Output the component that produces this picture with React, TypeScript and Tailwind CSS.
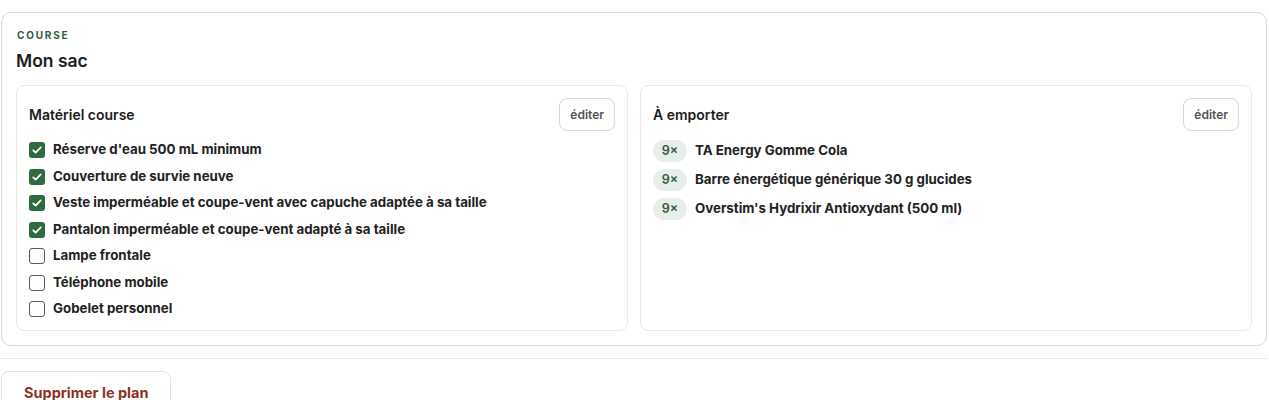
const gear = [
  { label: "Réserve d'eau 500 mL minimum", done: true },
  { label: "Couverture de survie neuve", done: true },
  { label: "Veste imperméable et coupe-vent avec capuche adaptée à sa taille", done: true },
  { label: "Pantalon imperméable et coupe-vent adapté à sa taille", done: true },
  { label: "Lampe frontale", done: false },
  { label: "Téléphone mobile", done: false },
  { label: "Gobelet personnel", done: false },
];

const food = [
  { qty: 9, label: "TA Energy Gomme Cola" },
  { qty: 9, label: "Barre énergétique générique 30 g glucides" },
  { qty: 9, label: "Overstim's Hydrixir Antioxydant (500 ml)" },
];

function Check({ on }: { on: boolean }) {
  if (on) {
    return (
      <span className="flex h-4 w-4 shrink-0 items-center justify-center rounded-[3px] bg-[#2e6b3f]">
        <svg viewBox="0 0 16 16" className="h-3 w-3" fill="none">
          <path d="M3 8.5l3.2 3L13 4.5" stroke="white" strokeWidth="2.4" strokeLinecap="round" strokeLinejoin="round" />
        </svg>
      </span>
    );
  }
  return <span className="h-4 w-4 shrink-0 rounded-[3px] border-[1.5px] border-[#5a5a5a] bg-white" />;
}

function PanelHeader({ title }: { title: string }) {
  return (
    <div className="flex items-center justify-between">
      <h3 className="text-[14px] font-semibold text-[#1c1c1c]">{title}</h3>
      <button className="h-[33px] rounded-lg border border-[#dcd8d2] px-[10px] text-[12px] font-semibold text-[#555]">
        éditer
      </button>
    </div>
  );
}

export default function App() {
  return (
    <div className="min-h-screen bg-white pl-px pr-[2px] pt-3 font-['Inter',sans-serif] text-[#1c1c1c]">
      {/* Plan card */}
      <section className="rounded-[10px] border border-[#dddad5] px-[14px] pb-[14px] pt-[15px]">
        <p className="pl-px text-[10px] font-bold leading-[15px] tracking-[0.18em] text-[#2f5d3f]">COURSE</p>
        <h2 className="mt-1 text-[17.5px] font-semibold leading-7">Mon sac</h2>

        <div className="mt-2.5 grid grid-cols-2 gap-3">
          {/* Left: gear checklist */}
          <div className="rounded-lg border border-[#ece9e5] p-3 pb-[11px]">
            <PanelHeader title="Matériel course" />
            <ul className="mt-[9px] flex flex-col gap-[6.5px]">
              {gear.map((g) => (
                <li key={g.label} className="flex h-5 items-center gap-2">
                  <Check on={g.done} />
                  <span className="text-[13.3px] font-bold text-[#222]">{g.label}</span>
                </li>
              ))}
            </ul>
          </div>

          {/* Right: food to carry */}
          <div className="rounded-lg border border-[#ece9e5] p-3">
            <PanelHeader title="À emporter" />
            <ul className="mt-[9px] flex flex-col gap-[7px]">
              {food.map((f) => (
                <li key={f.label} className="flex h-[22px] items-center gap-2">
                  <span className="flex h-[22px] w-[34px] items-center justify-center rounded-full bg-[#e8eee9] text-[12.5px] font-semibold text-[#2f5d3f]">
                    {f.qty}×
                  </span>
                  <span className="text-[13.3px] font-bold text-[#222]">{f.label}</span>
                </li>
              ))}
            </ul>
          </div>
        </div>
      </section>

      <hr className="mt-3 border-[#f1e5de]" />

      <button className="mt-3 rounded-lg border border-[#efdcd3] px-[22px] py-2.5 text-[14.5px] font-bold text-[#8a3324]">
        Supprimer le plan
      </button>
    </div>
  );
}
